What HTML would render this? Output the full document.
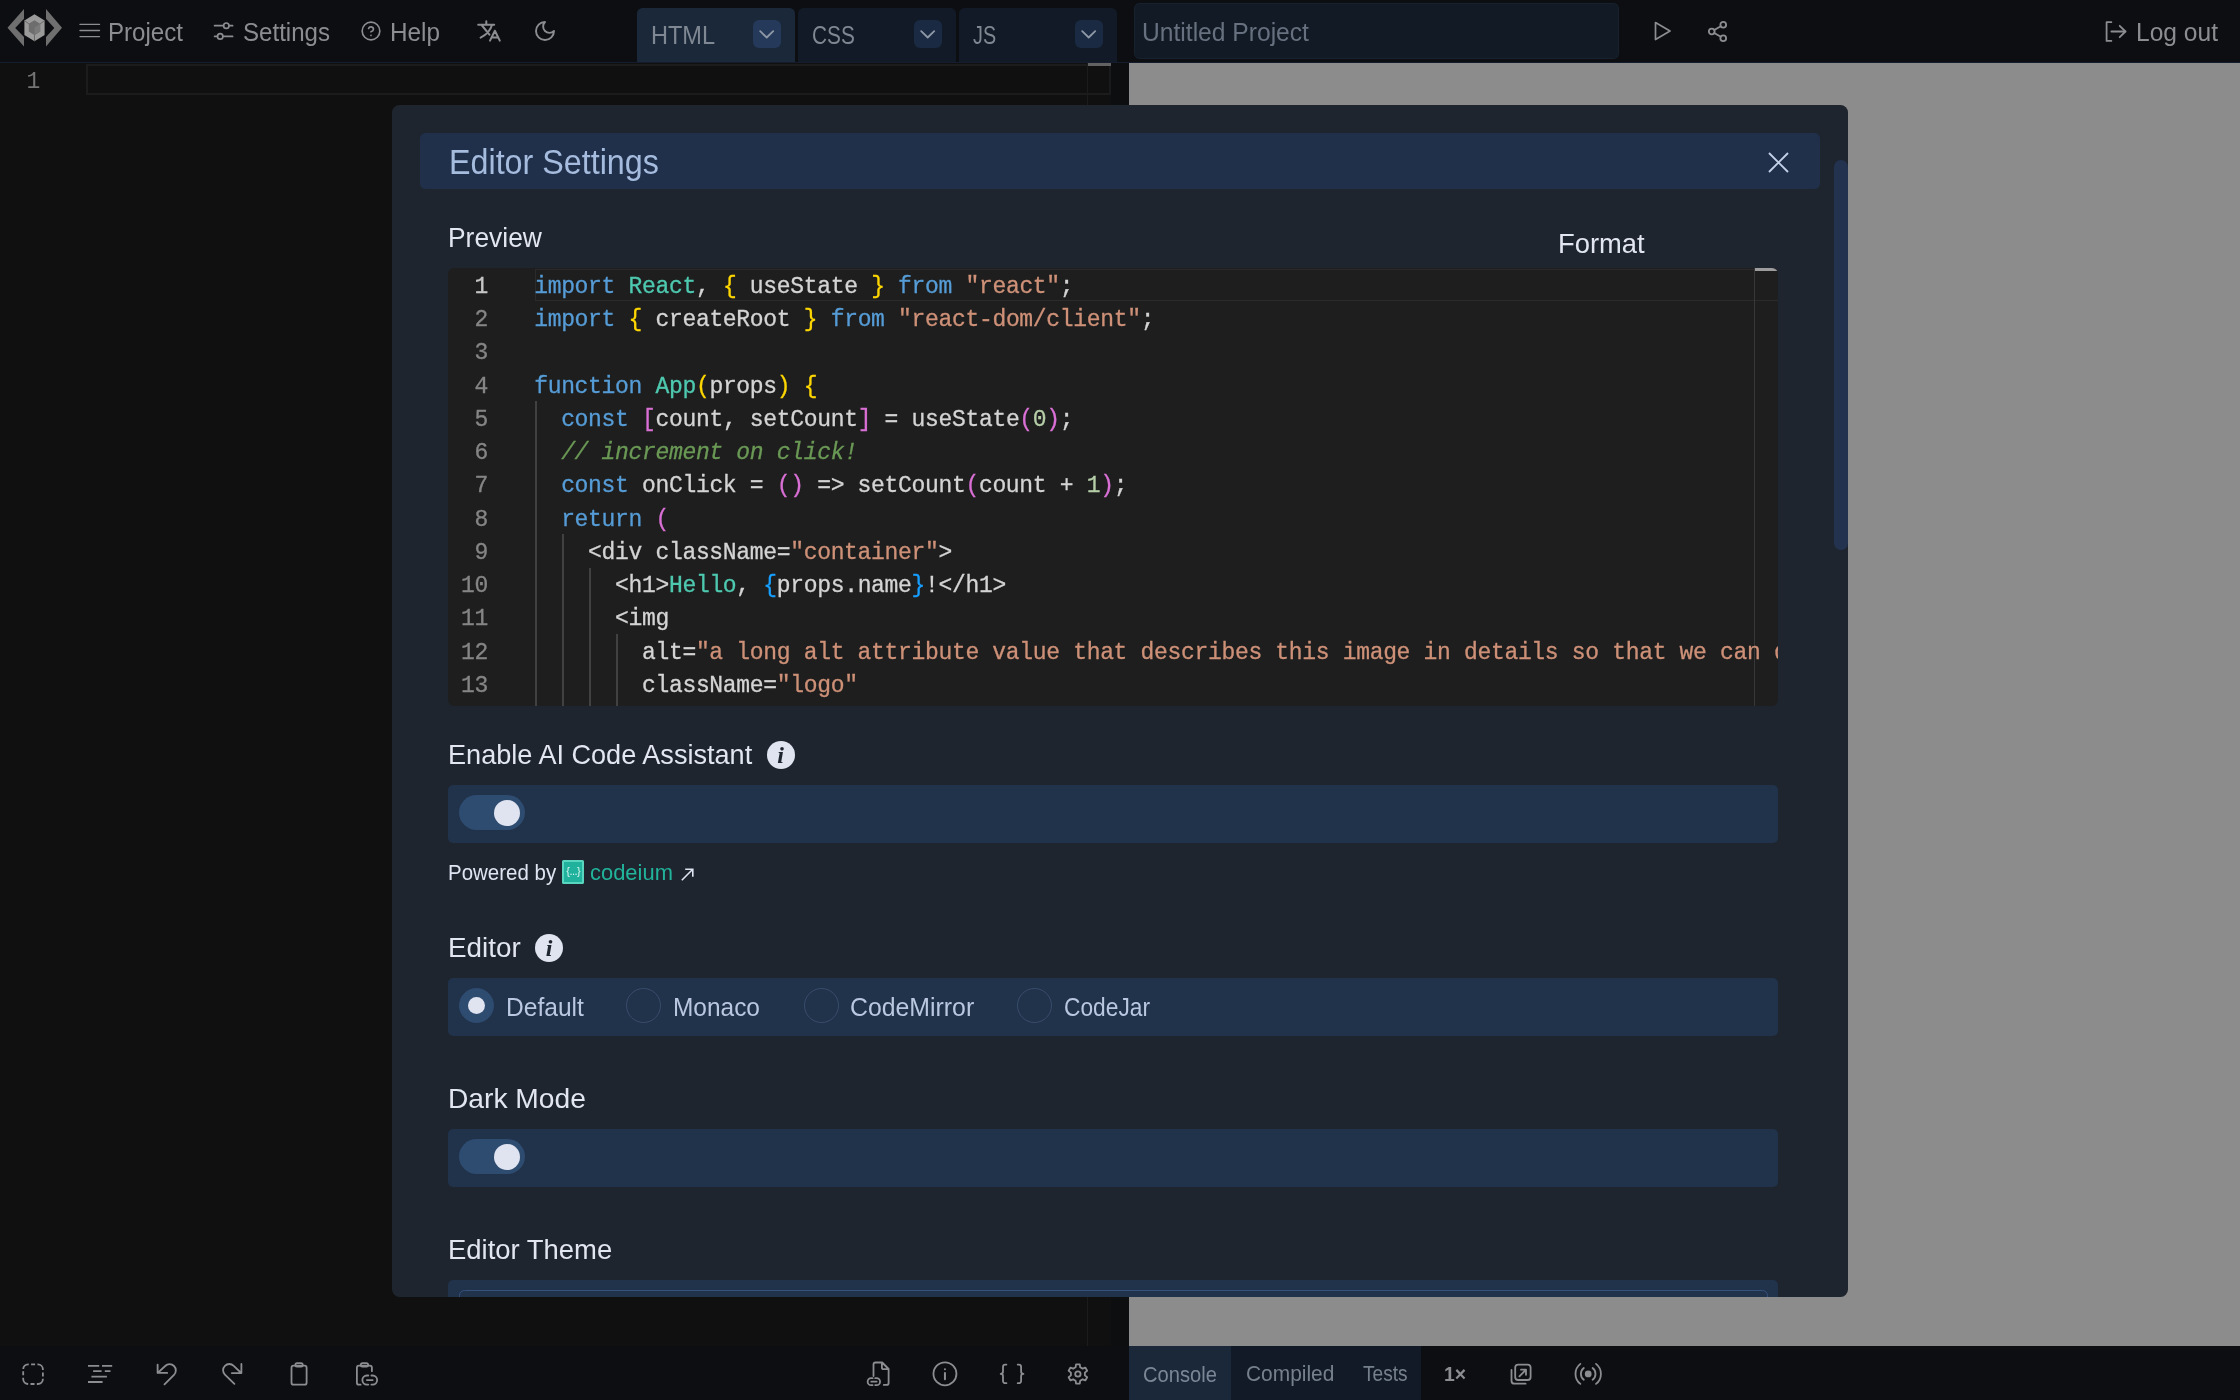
<!DOCTYPE html>
<html lang="en">
<head>
<meta charset="utf-8">
<title>LiveCodes - Editor Settings</title>
<style>
*{box-sizing:border-box;margin:0;padding:0}
html,body{width:2240px;height:1400px;overflow:hidden;background:#0f0f0f}
body{position:relative;font-family:"Liberation Sans",sans-serif;color:#8b8d91}
.abs{position:absolute}
.t{position:absolute;white-space:nowrap;line-height:1}
svg{position:absolute;overflow:visible}
.ic{fill:none;stroke:#8b8d91;stroke-width:1.9;stroke-linecap:round;stroke-linejoin:round}

/* ---------- top bar ---------- */
#topbar{left:0;top:0;width:2240px;height:62px;background:#0d0e11}
#topline{left:0;top:62px;width:2240px;height:1px;background:#141d2c}
.menu{font-size:26px;color:#8b8d91;top:19px}
.tab{top:8px;width:157.5px;height:54px;border-radius:5.5px 5.5px 0 0;background:#121a27}
.tab.active{background:#1a283a}
.tab .lbl{position:absolute;left:14px;top:14px;font-size:26px;line-height:1;color:#7f8792}
.tab .dd{position:absolute;left:116px;top:12px;width:28px;height:28px;border-radius:6px;background:#1a2a42}
.tab.active .dd{background:#25395a}
#ptitle{left:1134px;top:3px;width:485px;height:56px;border-radius:5.5px;background:#121a26;border:1px solid #18222f}

/* ---------- panes ---------- */
#editor{left:0;top:63px;width:1129px;height:1283px;background:#101010}
#result{left:1129px;top:63px;width:1111px;height:1283px;background:#8c8c8c}
#gutter{left:1111px;top:63px;width:18px;height:1283px;background:#0d0e10}
#bottombar{left:0;top:1346px;width:2240px;height:54px;background:#0d0e11}

/* ---------- modal ---------- */
#modal{left:392px;top:105px;width:1456px;height:1192px;border-radius:7.5px;background:#1e252e;overflow:hidden}
.h{font-size:28px;color:#e2e6f0}
.row{width:1330px;height:58px;border-radius:5px;background:#21324b}
.sw{left:11px;top:10px;width:66px;height:34.7px;border-radius:18px;background:#2e4b70}
.sw i{position:absolute;left:35.4px;top:4.6px;width:26px;height:26px;border-radius:50%;background:#e0e4f1}
.info{width:28px;height:28px;border-radius:50%;background:#e0e4f1;color:#1e252e;font-family:"Liberation Serif",serif;font-style:italic;font-weight:bold;font-size:24px;line-height:28px;text-align:center}
.radio{width:35px;height:35px;border-radius:50%;border:1.2px solid #384c6c;top:10.2px}
.radio.on{background:#2e4b70;border-color:#2e4b70}
.radio.on i{position:absolute;left:8px;top:8.2px;width:17px;height:17px;border-radius:50%;background:#e0e4f1}
.rl{font-size:26px;color:#b9c7df;top:16px;margin-left:-1px}

#mtitle{left:420px;top:133px;width:1400px;height:55.5px;border-radius:5.5px;background:#21304a}
.ln{-webkit-text-stroke:.3px;position:absolute;margin-top:1.25px;left:448px;width:39.9px;text-align:right;font:23px/33.25px "Liberation Mono",monospace;letter-spacing:-.327px;color:#858585;white-space:pre}
.ln.on{color:#c6c6c6}
.cl{-webkit-text-stroke:.3px;position:absolute;margin-top:1.25px;left:534.2px;font:23px/33.25px "Liberation Mono",monospace;letter-spacing:-.327px;color:#d4d4d4;white-space:pre}
.k{color:#569cd6}.ty{color:#4ec9b0}.s{color:#ce9178}.n{color:#b5cea8}.c{color:#6a9955;font-style:italic}.b1{color:#ffd700}.b2{color:#da70d6}.b3{color:#179fff}
</style>
</head>
<body>
<div id="app" style="position:absolute;left:0;top:0;width:2240px;height:1400px;will-change:transform">

<!-- ======= TOP BAR ======= -->
<div id="topbar" class="abs"></div>
<div id="topline" class="abs"></div>

<!-- logo -->
<svg style="left:0;top:0" width="70" height="62" viewBox="0 0 70 62">
  <polygon points="24,9 7.5,27.7 24,46.5 24,37 15.2,27.9 24,18.7" fill="#6f6f6f"/>
  <polygon points="46,9 62,27.7 46,46.5 46,37 54.3,27.9 46,18.7" fill="#6f6f6f"/>
  <polygon points="34.5,14.3 44.6,20.6 44.6,35 34.5,41.3 24.4,35 24.4,20.6" fill="#9b9b9b"/>
  <polygon points="34.5,20.2 40.2,23.8 40.2,31.5 34.5,35.2 28.8,31.5 28.8,23.8" fill="#6d6d6d"/>
  <polygon points="34.5,27.6 40.2,23.8 40.2,31.5 34.5,35.2" fill="#7a7a7a"/>
  <path d="M24.4 20.6 28.8 23.8M44.6 20.6 40.2 23.8M34.5 41.3V35.2" stroke="#5c5c5c" stroke-width="0.8" fill="none"/>
</svg>
<!-- Project -->
<svg class="ic" style="left:0;top:0;stroke-width:1.35" width="120" height="62"><path d="M80 24.4H99.5M80 30.5H99.5M80 36.6H99.5"/></svg>
<span class="t menu" style="left:108px;transform-origin:0 0;transform:scaleX(.927)">Project</span>
<!-- Settings -->
<svg class="ic" style="left:0;top:0;stroke-width:1.7" width="260" height="62"><path d="M214.6 25.7H223.4M229.2 25.7H232.6M214.6 36.4H217.4M223.1 36.4H232.6"/><circle cx="226.3" cy="25.7" r="2.7"/><circle cx="220.2" cy="36.4" r="2.7"/></svg>
<span class="t menu" style="left:243px;transform-origin:0 0;transform:scaleX(.926)">Settings</span>
<!-- Help -->
<svg class="ic" style="left:360.5px;top:21px;stroke-width:2" width="20" height="20" viewBox="0 0 24 24"><circle cx="12" cy="12" r="10.6"/><path d="M9.09 9a3 3 0 0 1 5.83 1c0 2-3 3-3 3"/><path d="M12 17.3h.01"/></svg>
<span class="t menu" style="left:390px;transform-origin:0 0;transform:scaleX(.935)">Help</span>
<!-- language -->
<svg class="ic" style="left:0;top:0;stroke-width:2" width="520" height="62"><path d="M478.2 24.7H494.2M486.3 21.2V24.7M481.6 25 489.4 34.6M492 25C490.5 30 486 35 480.6 37.6M494.9 30.8 490 40.6M494.9 30.8 499.8 40.6M491.6 37.4H498.2"/></svg>
<!-- moon -->
<svg class="ic" style="left:533px;top:19px" width="24" height="24" viewBox="0 0 24 24"><path d="M12 3a6 6 0 0 0 9 9 9 9 0 1 1-9-9Z"/></svg>

<!-- editor tabs -->
<div class="abs tab active" style="left:637px"><span class="lbl" style="display:block;transform-origin:0 0;transform:scaleX(.905)">HTML</span><div class="dd"></div></div>
<div class="abs tab" style="left:798px"><span class="lbl" style="display:block;transform-origin:0 0;transform:scaleX(.80)">CSS</span><div class="dd"></div></div>
<div class="abs tab" style="left:959px"><span class="lbl" style="display:block;transform-origin:0 0;transform:scaleX(.76)">JS</span><div class="dd"></div></div>
<svg class="ic" style="left:0;top:0;stroke-width:1.8;stroke:#8f98a6" width="1120" height="62"><path d="M760.2 31.2 766.7 37.5 773.2 31.2M921.2 31.2 927.7 37.5 934.2 31.2M1082.2 31.2 1088.7 37.5 1095.2 31.2"/></svg>

<!-- project title -->
<div id="ptitle" class="abs"></div>
<span class="t" style="left:1142px;top:19px;font-size:26px;color:#66707e;transform-origin:0 0;transform:scaleX(.947)">Untitled Project</span>
<!-- run / share -->
<svg class="ic" style="left:1649px;top:19px;stroke-width:1.7" width="24" height="24" viewBox="0 0 24 24"><polygon points="6.5 3.5 21 12 6.5 20.5 6.5 3.5"/></svg>
<svg class="ic" style="left:1705.5px;top:19.5px;stroke-width:1.9" width="23" height="23" viewBox="0 0 24 24"><circle cx="18" cy="5" r="3"/><circle cx="6" cy="12" r="3"/><circle cx="18" cy="19" r="3"/><line x1="8.59" x2="15.42" y1="13.51" y2="17.49"/><line x1="15.41" x2="8.59" y1="6.51" y2="10.49"/></svg>
<!-- log out -->
<svg class="ic" style="left:2101.5px;top:19px;stroke-width:1.7" width="25" height="25" viewBox="0 0 24 24"><path d="M9 21H4.4V3H9"/><polyline points="17 17.5 22.5 12 17 6.5"/><line x1="22.5" x2="9" y1="12" y2="12"/></svg>
<span class="t menu" style="left:2136px;transform-origin:0 0;transform:scaleX(.945)">Log out</span>

<!-- ======= PANES ======= -->
<div id="editor" class="abs"></div>
<div id="gutter" class="abs"></div>
<div id="result" class="abs"></div>
<div id="bottombar" class="abs"></div>

<!-- main editor (dimmed, behind modal) -->
<span class="t" style="left:26.6px;top:71px;font:23px/1 'Liberation Mono',monospace;color:#747474">1</span>
<div class="abs" style="left:86.3px;top:64.3px;width:1002px;height:30.6px;border:2px solid #1c1c1c;border-right:0"></div>
<div class="abs" style="left:1087px;top:63px;width:1.3px;height:1283px;background:#1c1c1c"></div>
<div class="abs" style="left:1088px;top:63px;width:23px;height:2.9px;background:#626262"></div>
<div class="abs" style="left:1088.3px;top:65.8px;width:22.7px;height:29.1px;border-bottom:2px solid #1c1c1c"></div>

<div class="abs" style="left:1108.8px;top:66px;width:2px;height:29px;background:#1a1a1a"></div>

<!-- editor toolbar icons -->
<svg class="ic" style="left:0;top:0;stroke-width:1.8" width="1130" height="1400">
  <rect x="23.2" y="1364.3" width="19.7" height="19.7" rx="5" stroke-dasharray="4 2.35 8.9 2.35" stroke-dashoffset="14.7" stroke-linecap="butt"/>
  <path stroke-linecap="butt" d="M88 1365.9H99.2M102 1365.9H112.2M93.1 1371.2H101.6M104.8 1371.2H110.5M91.4 1376.7H106.9M88 1382H102.6"/>
  <path d="M157.6 1364.6V1372.9H167.2M164.5 1384.3 174 1374.8A6.2 6.2 0 0 0 165.2 1366L157.8 1372.8"/>
  <path d="M241.4 1364V1373.1H231.8M234.4 1383.8 224.9 1374.6A6.2 6.2 0 0 1 233.7 1365.8L241.2 1373"/>
  <rect x="291.5" y="1365.7" width="15.1" height="19" rx="2"/><rect x="295.4" y="1363.2" width="7.3" height="3.3" rx="1.6"/>
  <path d="M360.6 1384.7H358.9A2 2 0 0 1 356.9 1382.7V1367.7A2 2 0 0 1 358.9 1365.7H369.9A2 2 0 0 1 371.9 1367.7V1371.2"/><rect x="360.8" y="1363.2" width="7.3" height="3.3" rx="1.6"/>
  <path d="M368.3 1375.5H366.9A4.55 4.55 0 0 0 366.9 1384.6H368.3M371.4 1375.5H372.6A4.55 4.55 0 0 1 372.6 1384.6H371.4M366.9 1380.05H372.7"/>
  <!-- file link -->
  <path d="M873.5 1376V1364.5A2 2 0 0 1 875.5 1362.5H882.2L888.6 1369V1382.9A2 2 0 0 1 886.6 1384.9H883.8M881.9 1362.7V1367.4A1.8 1.8 0 0 0 883.7 1369.2H888.4"/>
  <path d="M872.6 1378.2H871.1A3.45 3.45 0 0 0 871.1 1385.1H872.6M875.2 1378.2H876.6A3.45 3.45 0 0 1 876.6 1385.1H875.2M871.3 1381.65H876.6"/>
  <!-- info -->
  <circle cx="944.95" cy="1373.8" r="11.5"/><path d="M944.95 1379.2V1373M944.95 1369.2V1369.3" stroke-width="2"/>
  <!-- braces -->
  <path d="M1006.4 1364.6H1005.3A2.3 2.3 0 0 0 1003 1366.9V1371.6A2.3 2.3 0 0 1 1000.7 1373.9A2.3 2.3 0 0 1 1003 1376.2V1380.9A2.3 2.3 0 0 0 1005.3 1383.2H1006.4M1017.7 1364.6H1018.8A2.3 2.3 0 0 1 1021.1 1366.9V1371.6A2.3 2.3 0 0 0 1023.4 1373.9A2.3 2.3 0 0 0 1021.1 1376.2V1380.9A2.3 2.3 0 0 1 1018.8 1383.2H1017.7"/>
  <!-- gear -->
  <path d="M1075.59 1367.29 L1076.03 1364.38 L1079.77 1364.38 L1080.21 1367.29 L1082.56 1368.64 L1085.30 1367.57 L1087.17 1370.81 L1084.87 1372.65 L1084.87 1375.35 L1087.17 1377.19 L1085.30 1380.43 L1082.56 1379.36 L1080.21 1380.71 L1079.77 1383.62 L1076.03 1383.62 L1075.59 1380.71 L1073.24 1379.36 L1070.50 1380.43 L1068.63 1377.19 L1070.93 1375.35 L1070.93 1372.65 L1068.63 1370.81 L1070.50 1367.57 L1073.24 1368.64Z"/><circle cx="1077.9" cy="1374" r="2.7"/>
</svg>

<!-- tools pane -->
<div class="abs" style="left:1129px;top:1346px;width:102px;height:54px;background:#1a283a"></div>
<div class="abs" style="left:1231px;top:1346px;width:190px;height:54px;background:#121a27"></div>
<span class="t" style="left:1143px;top:1363.5px;font-size:22.5px;color:#7c8796;transform-origin:0 0;transform:scaleX(.895)">Console</span>
<span class="t" style="left:1245.5px;top:1363px;font-size:22.5px;color:#76808d;transform-origin:0 0;transform:scaleX(.93)">Compiled</span>
<span class="t" style="left:1362.5px;top:1363px;font-size:22.5px;color:#76808d;transform-origin:0 0;transform:scaleX(.85)">Tests</span>
<span class="t" style="left:1443.5px;top:1363.7px;font-size:20px;font-weight:bold;color:#8b8d91;transform-origin:0 0;transform:scaleX(.97)">1×</span>
<svg class="ic" style="left:0;top:0;stroke-width:1.8" width="1700" height="1400">
  <rect x="1515.2" y="1364.6" width="15.4" height="15.4" rx="3"/>
  <path d="M1511.5 1369.8V1380.7A3 3 0 0 0 1514.5 1383.7H1525.6"/>
  <path d="M1519.4 1376.3 1526 1369.7M1521 1369.7H1526V1374.8"/>
  <circle cx="1588.2" cy="1373.9" r="3.4" fill="#8b8d91" stroke="none"/>
  <path d="M1596.02 1363.89A12.7 12.7 0 0 1 1596.02 1383.91M1580.38 1383.91A12.7 12.7 0 0 1 1580.38 1363.89M1592.59 1368.07A7.3 7.3 0 0 1 1592.59 1379.73M1583.81 1379.73A7.3 7.3 0 0 1 1583.81 1368.07"/>
</svg>

<!-- ======= MODAL ======= -->
<div id="modal" class="abs">
<div class="abs" style="left:-392px;top:-105px;width:2240px;height:1400px">
  <div id="mtitle" class="abs"></div>
  <span class="t" style="left:449px;top:143.5px;font-size:35px;color:#a5bcde;transform-origin:0 0;transform:scaleX(.922)">Editor Settings</span>
  <svg style="left:1768.5px;top:152.5px;fill:none;stroke:#c3d0e8;stroke-width:1.9" width="19" height="19"><path d="M0 0 19 19M19 0 0 19"/></svg>
  <div class="abs" style="left:1834px;top:160px;width:14px;height:390px;border-radius:7px;background:#22324f"></div>

  <span class="t h" style="left:448px;top:223.5px;font-size:27.5px;transform-origin:0 0;transform:scaleX(.96)">Preview</span>
  <span class="t h" style="left:1558px;top:229.8px;font-size:27.5px;transform-origin:0 0;transform:scaleX(.995)">Format</span>
<div class="abs" id="mon" style="left:448px;top:268px;width:1330px;height:438px;background:#1e1e1e;border-radius:6px;overflow:hidden">
<div class="abs" style="left:-448px;top:-268px;width:2240px;height:1400px">
<div class="abs" style="left:535px;top:268.6px;width:1250px;height:32.6px;border:1.75px solid #2b2b2b"></div>
<div class="abs" style="left:1753.6px;top:268px;width:1.4px;height:438px;background:#383838"></div>
<div class="abs" style="left:1755px;top:268px;width:23px;height:2.6px;background:#9d9d9d"></div>
<div class="abs" style="left:534.6px;top:401.25px;width:2px;height:33.55px;background:#414141"></div>
<div class="abs" style="left:534.6px;top:434.50px;width:2px;height:33.55px;background:#414141"></div>
<div class="abs" style="left:534.6px;top:467.75px;width:2px;height:33.55px;background:#414141"></div>
<div class="abs" style="left:534.6px;top:501.00px;width:2px;height:33.55px;background:#414141"></div>
<div class="abs" style="left:534.6px;top:534.25px;width:2px;height:33.55px;background:#414141"></div>
<div class="abs" style="left:561.6px;top:534.25px;width:2px;height:33.55px;background:#414141"></div>
<div class="abs" style="left:534.6px;top:567.50px;width:2px;height:33.55px;background:#414141"></div>
<div class="abs" style="left:561.6px;top:567.50px;width:2px;height:33.55px;background:#414141"></div>
<div class="abs" style="left:588.5px;top:567.50px;width:2px;height:33.55px;background:#414141"></div>
<div class="abs" style="left:534.6px;top:600.75px;width:2px;height:33.55px;background:#414141"></div>
<div class="abs" style="left:561.6px;top:600.75px;width:2px;height:33.55px;background:#414141"></div>
<div class="abs" style="left:588.5px;top:600.75px;width:2px;height:33.55px;background:#414141"></div>
<div class="abs" style="left:534.6px;top:634.00px;width:2px;height:33.55px;background:#414141"></div>
<div class="abs" style="left:561.6px;top:634.00px;width:2px;height:33.55px;background:#414141"></div>
<div class="abs" style="left:588.5px;top:634.00px;width:2px;height:33.55px;background:#414141"></div>
<div class="abs" style="left:615.5px;top:634.00px;width:2px;height:33.55px;background:#414141"></div>
<div class="abs" style="left:534.6px;top:667.25px;width:2px;height:33.55px;background:#414141"></div>
<div class="abs" style="left:561.6px;top:667.25px;width:2px;height:33.55px;background:#414141"></div>
<div class="abs" style="left:588.5px;top:667.25px;width:2px;height:33.55px;background:#414141"></div>
<div class="abs" style="left:615.5px;top:667.25px;width:2px;height:33.55px;background:#414141"></div>
<div class="abs" style="left:534.6px;top:700.50px;width:2px;height:33.55px;background:#414141"></div>
<div class="abs" style="left:561.6px;top:700.50px;width:2px;height:33.55px;background:#414141"></div>
<div class="abs" style="left:588.5px;top:700.50px;width:2px;height:33.55px;background:#414141"></div>
<div class="abs" style="left:615.5px;top:700.50px;width:2px;height:33.55px;background:#414141"></div>
<div class="ln on" style="top:269.60px">1</div>
<div class="cl" style="top:269.60px"><span class="k">import</span> <span class="ty">React</span>, <span class="b1">{</span> useState <span class="b1">}</span> <span class="k">from</span> <span class="s">"react"</span>;</div>
<div class="ln" style="top:302.85px">2</div>
<div class="cl" style="top:302.85px"><span class="k">import</span> <span class="b1">{</span> createRoot <span class="b1">}</span> <span class="k">from</span> <span class="s">"react-dom/client"</span>;</div>
<div class="ln" style="top:336.10px">3</div>
<div class="ln" style="top:369.35px">4</div>
<div class="cl" style="top:369.35px"><span class="k">function</span> <span class="ty">App</span><span class="b1">(</span>props<span class="b1">)</span> <span class="b1">{</span></div>
<div class="ln" style="top:402.60px">5</div>
<div class="cl" style="top:402.60px">  <span class="k">const</span> <span class="b2">[</span>count, setCount<span class="b2">]</span> = useState<span class="b2">(</span><span class="n">0</span><span class="b2">)</span>;</div>
<div class="ln" style="top:435.85px">6</div>
<div class="cl" style="top:435.85px">  <span class="c">// increment on click!</span></div>
<div class="ln" style="top:469.10px">7</div>
<div class="cl" style="top:469.10px">  <span class="k">const</span> onClick = <span class="b2">()</span> =&gt; setCount<span class="b2">(</span>count + <span class="n">1</span><span class="b2">)</span>;</div>
<div class="ln" style="top:502.35px">8</div>
<div class="cl" style="top:502.35px">  <span class="k">return</span> <span class="b2">(</span></div>
<div class="ln" style="top:535.60px">9</div>
<div class="cl" style="top:535.60px">    &lt;div className=<span class="s">"container"</span>&gt;</div>
<div class="ln" style="top:568.85px">10</div>
<div class="cl" style="top:568.85px">      &lt;h1&gt;<span class="ty">Hello</span>, <span class="b3">{</span>props.name<span class="b3">}</span>!&lt;/h1&gt;</div>
<div class="ln" style="top:602.10px">11</div>
<div class="cl" style="top:602.10px">      &lt;img</div>
<div class="ln" style="top:635.35px">12</div>
<div class="cl" style="top:635.35px">        alt=<span class="s">"a long alt attribute value that describes this image in details so that we can demonstrate word-wrap"</span></div>
<div class="ln" style="top:668.60px">13</div>
<div class="cl" style="top:668.60px">        className=<span class="s">"logo"</span></div>
</div></div>

  <span class="t h" style="left:448px;top:740.5px;font-size:27.5px;transform-origin:0 0;transform:scaleX(.985)">Enable AI Code Assistant</span>
  <div class="abs info" style="left:766.7px;top:740.9px">i</div>
  <div class="abs row" style="left:448px;top:785px"><div class="abs sw"><i></i></div></div>

  <span class="t" style="left:448px;top:861.5px;font-size:22.5px;color:#dfe5f2;transform-origin:0 0;transform:scaleX(.91)">Powered by</span>
  <div class="abs" style="left:562px;top:860.2px;width:22px;height:23.5px;background:#20b29c;border:2px solid #59d6c0;border-radius:1.5px"></div>
  <span class="t" style="left:566.3px;top:865.8px;font-size:11px;color:#d4f7f0;letter-spacing:-.55px">{...}</span>
  <span class="t" style="left:589.5px;top:861.5px;font-size:22.5px;color:#22b39c;transform-origin:0 0;transform:scaleX(.975)">codeium</span>
  <svg style="left:681.2px;top:868.2px;fill:none;stroke:#dfe5f2;stroke-width:1.6" width="13" height="13"><path d="M0.8 12.2 11.5 1.5M4.2 1.2H11.8V8.8"/></svg>

  <span class="t h" style="left:448px;top:934px;font-size:27.5px;transform-origin:0 0;transform:scaleX(1.012)">Editor</span>
  <div class="abs info" style="left:535px;top:934px">i</div>
  <div class="abs row" style="left:448px;top:978px">
    <div class="abs radio on" style="left:11px"><i></i></div><span class="t rl" style="left:58.5px;transform-origin:0 0;transform:scaleX(.945)">Default</span>
    <div class="abs radio" style="left:178px"></div><span class="t rl" style="left:226px;transform-origin:0 0;transform:scaleX(.94)">Monaco</span>
    <div class="abs radio" style="left:356px"></div><span class="t rl" style="left:403px;transform-origin:0 0;transform:scaleX(.955)">CodeMirror</span>
    <div class="abs radio" style="left:569px"></div><span class="t rl" style="left:616.5px;transform-origin:0 0;transform:scaleX(.875)">CodeJar</span>
  </div>

  <span class="t h" style="left:448px;top:1084.5px;font-size:27.5px;transform-origin:0 0;transform:scaleX(1.025)">Dark Mode</span>
  <div class="abs row" style="left:448px;top:1129px"><div class="abs sw"><i></i></div></div>

  <span class="t h" style="left:448px;top:1235.5px;font-size:27.5px;transform-origin:0 0;transform:scaleX(.998)">Editor Theme</span>
  <div class="abs row" style="left:448px;top:1280px;height:80px"><div class="abs" style="left:11px;top:9.6px;width:1308.5px;height:60px;border:1.4px solid #37517d;border-radius:5.5px"></div></div>
</div>
</div>
</div>
</body>
</html>
